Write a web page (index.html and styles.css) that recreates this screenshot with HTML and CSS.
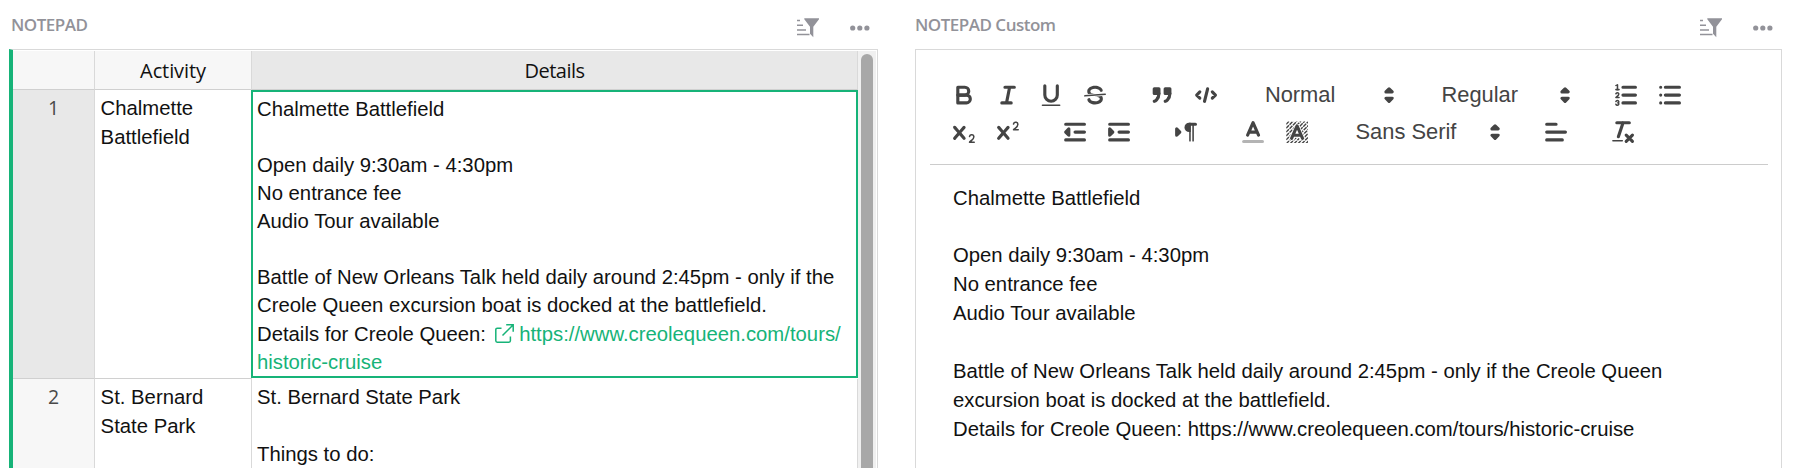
FILE: index.html
```html
<!DOCTYPE html>
<html lang="en">
<head>
<meta charset="utf-8">
<title>Notepad</title>
<link rel="stylesheet" href="styles.css">
</head>
<body>
<svg class="defs" aria-hidden="true">
  <symbol id="sort-filter" viewBox="0 0 22 20">
    <path d="M0 2.5H3M0 7.3H6M0 12H9M0 16.6H12.5" fill="none" stroke="currentColor" stroke-width="1.5"/>
    <path d="M7.3 .2H22V1.2L16.3 8.8V19.2L13 15.8V8.8L7.3 1.2Z" fill="currentColor"/>
  </symbol>
  <symbol id="dots" viewBox="0 0 20 6">
    <circle cx="2.7" cy="3" r="2.6" fill="currentColor"/><circle cx="9.8" cy="3" r="2.6" fill="currentColor"/><circle cx="16.9" cy="3" r="2.6" fill="currentColor"/>
  </symbol>
  <symbol id="updown" viewBox="0 0 18 18">
    <polygon class="fs" points="7 11 9 13 11 11 7 11"/><polygon class="fs" points="7 7 9 5 11 7 7 7"/>
  </symbol>
</svg>
<main class="page">
  <section class="panel">
    <header class="panel-head">
      <h2>NOTEPAD</h2>
      <svg class="i-sort"><use href="#sort-filter"/></svg>
      <svg class="i-dots"><use href="#dots"/></svg>
    </header>
    <div class="grid-box">
      <div class="grid">
        <div class="hcell corner"></div>
        <div class="hcell"><span class="h-activity">Activity</span></div>
        <div class="hcell current"><span class="h-details">Details</span></div>
        <div class="num current">1</div>
        <div class="cell">Chalmette Battlefield</div>
        <div class="cell selected">Chalmette Battlefield

Open daily 9:30am - 4:30pm
No entrance fee
Audio Tour available

Battle of New Orleans Talk held daily around 2:45pm - only if the Creole Queen excursion boat is docked at the battlefield.
Details for Creole Queen: <a class="link"><svg class="i-link" viewBox="0 0 19 19"><path d="M6.5 4.2H2.2Q.8 4.2 .8 5.6V16.8Q.8 18.2 2.2 18.2H14Q15.4 18.2 15.4 16.8V12.5M7.5 11.5L18 1M11.2 .8H18.2V7.8"/></svg><span>https://www.creolequeen.com/tours/</span><wbr><span>historic-cruise</span></a></div>
        <div class="num">2</div>
        <div class="cell">St. Bernard State Park</div>
        <div class="cell">St. Bernard State Park

Things to do:</div>
      </div>
      <div class="scroll"><div class="thumb"></div></div>
    </div>
  </section>

  <section class="panel">
    <header class="panel-head">
      <h2>NOTEPAD Custom</h2>
      <svg class="i-sort"><use href="#sort-filter"/></svg>
      <svg class="i-dots"><use href="#dots"/></svg>
    </header>
    <div class="custom">
      <div class="toolbar">
        <div class="group">
          <button><svg viewBox="0 0 18 18"><path class="s" d="M5,4H9.5A2.5,2.5,0,0,1,12,6.5v0A2.5,2.5,0,0,1,9.5,9H5A0,0,0,0,1,5,9V4A0,0,0,0,1,5,4Z"/><path class="s" d="M5,9h5.5A2.5,2.5,0,0,1,13,11.5v0A2.5,2.5,0,0,1,10.5,14H5a0,0,0,0,1,0,0V9A0,0,0,0,1,5,9Z"/></svg></button>
          <button><svg viewBox="0 0 18 18"><path class="s" d="M7 4H13M5 14H11M8 14L10 4"/></svg></button>
          <button><svg viewBox="0 0 18 18"><path class="s" d="M5,3V9a4.012,4.012,0,0,0,4,4H9a4.012,4.012,0,0,0,4-4V3"/><rect class="f" height="1" rx=".5" ry=".5" width="12" x="3" y="15"/></svg></button>
          <button><svg viewBox="0 0 18 18"><path class="s thin" d="M15.5 8.5L2.5 9.5"/><path class="f" d="M9.007,8C6.542,7.791,6,7.519,6,6.5,6,5.792,7.283,5,9,5c1.571,0,2.765.679,2.969,1.309a1,1,0,0,0,1.9-.617C13.356,4.106,11.354,3,9,3,6.2,3,4,4.538,4,6.5a3.2,3.2,0,0,0,.5,1.843Z"/><path class="f" d="M8.984,10C11.457,10.208,12,10.479,12,11.5c0,0.708-1.283,1.5-3,1.5-1.571,0-2.765-.679-2.969-1.309a1,1,0,1,0-1.9.617C4.644,13.894,6.646,15,9,15c2.8,0,5-1.538,5-3.5a3.2,3.2,0,0,0-.5-1.843Z"/></svg></button>
        </div>
        <div class="group">
          <button><svg viewBox="0 0 18 18"><rect class="fs" height="3" width="3" x="4" y="5"/><rect class="fs" height="3" width="3" x="11" y="5"/><path class="fs" d="M7,8c0,4.031-3,5-3,5"/><path class="fs" d="M14,8c0,4.031-3,5-3,5"/></svg></button>
          <button><svg viewBox="0 0 18 18"><path class="s" d="M5 7L3 9L5 11M13 7L15 9L13 11M10 5L8 13"/></svg></button>
        </div>
        <div class="group"><div class="picker">Normal<svg><use href="#updown"/></svg></div></div>
        <div class="group"><div class="picker">Regular<svg><use href="#updown"/></svg></div></div>
        <div class="group">
          <button><svg viewBox="0 0 18 18"><path class="s" d="M7 4H15M7 9H15M7 14H15"/><path class="s thin" d="M2.5 5.5H4.5"/><path class="f" d="M3.5,6A0.5,0.5,0,0,1,3,5.5V3.085l-0.276.138A0.5,0.5,0,0,1,2.053,3c-0.124-.247-0.023-0.324.224-0.447l1-.5A0.5,0.5,0,0,1,4,2.5v3A0.5,0.5,0,0,1,3.5,6Z"/><path class="s thin" d="M4.5,10.5h-2c0-.234,1.85-1.076,1.85-2.234A0.959,0.959,0,0,0,2.5,8.156"/><path class="s thin" d="M2.5,14.846a0.959,0.959,0,0,0,1.85-.109A0.7,0.7,0,0,0,3.75,14a0.688,0.688,0,0,0,.6-0.736,0.959,0.959,0,0,0-1.85-.109"/></svg></button>
          <button><svg viewBox="0 0 18 18"><path class="s" d="M6 4H15M6 9H15M6 14H15M3 4H3M3 9H3M3 14H3"/></svg></button>
        </div>
        <div class="group">
          <button><svg viewBox="0 0 18 18"><path class="f" d="M15.5,15H13.861a3.858,3.858,0,0,0,1.914-2.975,1.8,1.8,0,0,0-1.6-1.751A1.921,1.921,0,0,0,12.021,11.7a0.50013,0.50013,0,1,0,.957.291h0a0.914,0.914,0,0,1,1.053-.725,0.81,0.81,0,0,1,.744.762c0,1.076-1.16971,1.86982-1.93971,2.43082A1.45639,1.45639,0,0,0,12,15.5a0.5,0.5,0,0,0,.5.5h3A0.5,0.5,0,0,0,15.5,15Z"/><path class="f" d="M9.65,5.241a1,1,0,0,0-1.409.108L6,7.964,3.759,5.349A1,1,0,0,0,2.192,6.59178Q2.21541,6.6213,2.241,6.649L4.684,9.5,2.241,12.35A1,1,0,0,0,3.71,13.70722q0.02557-.02768.049-0.05722L6,11.036,8.241,13.65a1,1,0,1,0,1.567-1.24277Q9.78459,12.3777,9.759,12.35L7.316,9.5,9.759,6.651A1,1,0,0,0,9.65,5.241Z"/></svg></button>
          <button><svg viewBox="0 0 18 18"><path class="f" d="M15.5,7H13.861a4.015,4.015,0,0,0,1.914-2.975,1.8,1.8,0,0,0-1.6-1.751A1.922,1.922,0,0,0,12.021,3.7a0.5,0.5,0,1,0,.957.291,0.917,0.917,0,0,1,1.053-.725,0.81,0.81,0,0,1,.744.762c0,1.077-1.164,1.925-1.934,2.486A1.423,1.423,0,0,0,12,7.5a0.5,0.5,0,0,0,.5.5h3A0.5,0.5,0,0,0,15.5,7Z"/><path class="f" d="M9.651,5.241a1,1,0,0,0-1.41.108L6,7.964,3.759,5.349a1,1,0,1,0-1.519,1.3L4.683,9.5,2.241,12.35a1,1,0,1,0,1.519,1.3L6,11.036,8.241,13.65a1,1,0,0,0,1.519-1.3L7.317,9.5,9.759,6.651A1,1,0,0,0,9.651,5.241Z"/></svg></button>
        </div>
        <div class="group">
          <button><svg viewBox="0 0 18 18"><path class="s" d="M3 14H15M3 4H15M9 9H15"/><polygon class="fs" points="5 7 5 11 3 9 5 7"/></svg></button>
          <button><svg viewBox="0 0 18 18"><path class="s" d="M3 14H15M3 4H15M9 9H15"/><polygon class="fs" points="3 7 3 11 5 9 3 7"/></svg></button>
        </div>
        <div class="group">
          <button><svg viewBox="0 0 18 18"><polygon class="fs" points="3 11 5 9 3 7 3 11"/><path class="s f" d="M11 4H15"/><path class="f" d="M11,3a3,3,0,0,0,0,6h1V3H11Z"/><rect class="f" height="11" width="1" x="11" y="4"/><rect class="f" height="11" width="1" x="13" y="4"/></svg></button>
        </div>
        <div class="group">
          <button><svg viewBox="0 0 18 18"><path class="s faded" d="M3 15H15"/><path class="s" d="M5.5 11L9 3L12.5 11M11.63 9H6.38"/></svg></button>
          <button><svg viewBox="0 0 18 18"><defs><clipPath id="bg-clip"><path clip-rule="evenodd" d="M2 2H16V16H2ZM8 3.8L4.2 12V14H7.2L7.8 12.6H10.2L10.8 14H13.8V12L10 3.8Z"/></clipPath></defs><path class="s hatch" clip-path="url(#bg-clip)" d="M2 4L4 2M2 6.5L6.5 2M2 9L9 2M2 11.5L11.5 2M2 14L14 2M2 16.5L16.5 2M4.5 16.5L16.5 4.5M7 16.5L16.5 7M9.5 16.5L16.5 9.5M12 16.5L16.5 12M14.5 16.5L16.5 14.5"/><path class="s" d="M5.5 13L9 5L12.5 13M11.63 11H6.38"/></svg></button>
        </div>
        <div class="group"><div class="picker wide">Sans Serif<svg><use href="#updown"/></svg></div></div>
        <div class="group">
          <button><svg viewBox="0 0 18 18"><path class="s" d="M3 9H15M3 14H13M3 4H9"/></svg></button>
        </div>
        <div class="group">
          <button><svg viewBox="0 0 18 18"><path class="s" d="M5 3H13M6 12L9 3M11 11L15 15M15 11L11 15"/><rect class="f" height="1" rx=".5" ry=".5" width="7" x="2" y="14"/></svg></button>
        </div>
      </div>
      <div class="editor">Chalmette Battlefield

Open daily 9:30am - 4:30pm
No entrance fee
Audio Tour available

Battle of New Orleans Talk held daily around 2:45pm - only if the Creole Queen excursion boat is docked at the battlefield.
Details for Creole Queen: https://www.creolequeen.com/tours/historic-cruise</div>
    </div>
  </section>
</main>
</body>
</html>
```
FILE: styles.css
```css
* { box-sizing: border-box; }
body {
  margin: 0;
  background: #fff;
  color: #111;
  font-family: "Liberation Sans", Arial, sans-serif;
  font-size: 20.3125px;
  overflow: hidden;
}
.defs { position: absolute; width: 0; height: 0; }
.page {
  display: grid;
  grid-template-columns: 869px 867px;
  gap: 37px;
  height: 468px;
  padding-left: 9px;
}
.panel { display: flex; flex-direction: column; height: 468px; min-width: 0; }

.panel-head {
  display: flex;
  align-items: center;
  flex: none;
  height: 49px;
  padding: 6px 8px 0 2px;
  color: #929299;
}
.panel:last-child .panel-head { padding-left: 0; padding-right: 9px; }
.panel-head h2 {
  flex: 1;
  margin: 0;
  padding-bottom: 5px;
  font: 600 17px/24px "Open Sans", sans-serif;
  letter-spacing: -.5px;
}
.i-sort { width: 22px; height: 20px; margin-right: 31px; }
.i-dots { width: 20px; height: 6px; }

/* Table */
.grid-box {
  display: flex;
  flex: 1;
  min-height: 0;
  border: solid #d9d9d9;
  border-width: 1px 1px 0 0;
  border-left: 4px solid #16b378;
  padding-top: 1px;
}
.grid {
  display: grid;
  grid-template-columns: 82px 157px 606px;
  grid-template-rows: 39px 289px 89px;
  flex: none;
}
.hcell, .num, .cell { border-right: 1px solid #d9d9d9; border-bottom: 1px solid #d0d0d0; }
.num:nth-last-child(-n+3), .cell:nth-last-child(-n+3) { border-bottom: 0; }
.hcell {
  background: #f7f7f7;
  text-align: center;
  font: 20px/39px "Open Sans", sans-serif;
}
.h-activity { letter-spacing: -.1px; }
.h-details { letter-spacing: -.5px; }
.hcell.current, .num.current { background: #e8e8e8; }
.num {
  background: #f7f7f7;
  color: #494949;
  text-align: center;
  font: 19.5px/28px "Open Sans", sans-serif;
  padding-top: 4px;
}
.cell {
  padding: 4.4px 5px 0 5.6px;
  line-height: 28.125px;
  white-space: pre-wrap;
}
.cell.selected {
  margin: 0 0 1px -1px;
  padding: 2.5px 4px 0;
  border: 2px solid #16b378;
}
.cell:last-child { padding-left: 5px; }
.link { color: #16b378; }
.i-link {
  width: 19px;
  height: 19px;
  margin: 0 5px 0 3.5px;
  vertical-align: -2px;
  fill: none;
  stroke: #16b378;
  stroke-width: 1.5;
}
.scroll { flex: 1; padding: 3px 3px 0; background: #f0f0f0; border-right: 1px solid #fff; }
.thumb { width: 12px; height: 100%; border-radius: 6px 6px 0 0; background: #a8a8a8; }

/* Rich text editor */
.custom {
  flex: 1;
  min-height: 0;
  border: solid #d9d9d9;
  border-width: 1px 1px 0;
  padding: 14px 13px 0 14px;
}
.toolbar {
  display: flex;
  flex-wrap: wrap;
  padding: 12px 0 12.5px 12px;
  border-bottom: 1px solid #ccc;
  color: #444;
}
.group { display: flex; margin-right: 23.4375px; }
button {
  width: 43.75px;
  height: 37.5px;
  padding: 4.6875px 7.8125px;
  border: 0;
  background: none;
}
button svg { display: block; width: 28.125px; height: 28.125px; }
.s { fill: none; stroke: #444; stroke-width: 2; stroke-linecap: round; stroke-linejoin: round; }
.s.thin { stroke-width: 1; }
.s.faded { opacity: .4; }
.s.hatch { stroke-width: .9; stroke-linecap: butt; stroke-dasharray: 2.6 .5; }
.f { fill: #444; }
.fs { fill: #444; stroke: #444; stroke-width: 2; stroke-linecap: round; stroke-linejoin: round; }
.picker {
  display: flex;
  justify-content: space-between;
  align-items: center;
  width: 153.125px;
  height: 37.5px;
  padding: 0 1.5px 0 13.5px;
  font-size: 21.875px;
}
.picker.wide { width: 168.75px; }
.picker svg { width: 28.125px; height: 28.125px; }
.editor {
  padding: 19.3px 23px 0;
  line-height: 28.84px;
  white-space: pre-wrap;
}
```
